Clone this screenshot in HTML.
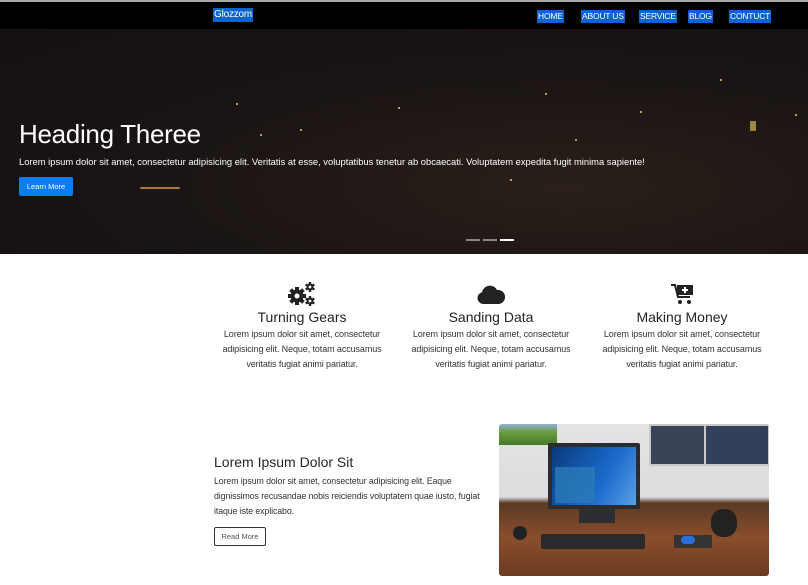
<!DOCTYPE html>
<html><head><style>
*{margin:0;padding:0;box-sizing:border-box}
body{width:808px;height:585px;background:#fff;font-family:"Liberation Sans",sans-serif;position:relative;overflow:hidden;color:#212529}
.nav{position:absolute;top:0;left:0;width:808px;height:29px;background:#000;border-top:2px solid #aaa}
.nav span{position:absolute;background:#0b63ce;color:#fff;font-size:8.5px;line-height:13px;padding:0 1px;letter-spacing:-0.2px}
.hero{position:absolute;top:29px;left:0;width:808px;height:225px;background:radial-gradient(ellipse at 70% 70%,#2a2019 0%,#1a1414 50%,#141011 100%)}
.dot{position:absolute;width:2px;height:2px;background:#f3c46a;border-radius:1px}
h1{position:absolute;left:19px;top:119px;font-weight:300;font-size:26px;color:#fff;letter-spacing:-0.3px}
.sub{position:absolute;left:19px;top:156px;font-size:9.4px;color:#fff}
.btn{position:absolute;left:19px;top:177px;width:54px;height:19px;background:#0a7cf5;color:#fff;font-size:7.5px;text-align:center;line-height:19px;border-radius:2px}
.ind{position:absolute;top:239px;height:2px;width:14px;background:#888}
.col{position:absolute;top:281px;width:172px;text-align:center}
.col h3{font-size:14px;font-weight:500;margin-top:2px}
.col p{font-size:9px;line-height:15px;color:#333;margin-top:2px;letter-spacing:-0.1px}
.ic{height:26px;display:flex;justify-content:center;align-items:center}
</style></head><body>
<div class="nav">
<span style="left:213px;top:6px;font-size:10px;line-height:14px">Glozzom</span>
<span style="left:537px;top:8px">HOME</span>
<span style="left:581px;top:8px">ABOUT US</span>
<span style="left:639px;top:8px">SERVICE</span>
<span style="left:688px;top:8px">BLOG</span>
<span style="left:729px;top:8px">CONTUCT</span>
</div>
<div class="hero">
<div class="dot" style="left:236px;top:74px"></div><div class="dot" style="left:300px;top:100px"></div><div class="dot" style="left:398px;top:78px"></div><div class="dot" style="left:260px;top:105px"></div><div class="dot" style="left:545px;top:64px"></div><div class="dot" style="left:640px;top:82px"></div><div class="dot" style="left:720px;top:50px"></div><div class="dot" style="left:750px;top:92px;width:6px;height:10px;background:#9a8a40"></div><div class="dot" style="left:795px;top:85px"></div><div class="dot" style="left:140px;top:158px;width:40px;background:#a57a3a"></div><div class="dot" style="left:510px;top:150px"></div><div class="dot" style="left:575px;top:110px"></div>
</div>
<h1>Heading Theree</h1>
<div class="sub">Lorem ipsum dolor sit amet, consectetur adipisicing elit. Veritatis at esse, voluptatibus tenetur ab obcaecati. Voluptatem expedita fugit minima sapiente!</div>
<div class="btn">Learn More</div>
<div class="ind" style="left:466px"></div><div class="ind" style="left:483px"></div><div class="ind" style="left:500px;background:#fff"></div>

<div class="col" style="left:216px"><div class="ic"><svg width="28" height="24" viewBox="0 0 28 24">
<g fill="#222"><g transform="translate(9,14)"><rect x="-2" y="-9" width="4" height="18"/><rect x="-2" y="-9" width="4" height="18" transform="rotate(45)"/><rect x="-2" y="-9" width="4" height="18" transform="rotate(90)"/><rect x="-2" y="-9" width="4" height="18" transform="rotate(135)"/><circle r="6.5"/><circle r="2.5" fill="#fff"/></g>
<g transform="translate(22,5)"><rect x="-1.2" y="-5" width="2.4" height="10"/><rect x="-1.2" y="-5" width="2.4" height="10" transform="rotate(60)"/><rect x="-1.2" y="-5" width="2.4" height="10" transform="rotate(120)"/><circle r="3.5"/><circle r="1.4" fill="#fff"/></g>
<g transform="translate(22,19)"><rect x="-1.2" y="-5" width="2.4" height="10"/><rect x="-1.2" y="-5" width="2.4" height="10" transform="rotate(60)"/><rect x="-1.2" y="-5" width="2.4" height="10" transform="rotate(120)"/><circle r="3.5"/><circle r="1.4" fill="#fff"/></g></g></svg></div><h3>Turning Gears</h3><p>Lorem ipsum dolor sit amet, consectetur adipisicing elit. Neque, totam accusamus veritatis fugiat animi pariatur.</p></div>
<div class="col" style="left:405px"><div class="ic"><svg width="28" height="20" viewBox="0 0 28 20"><path d="M6 20a6 6 0 0 1-1-11.8A8 8 0 0 1 20 6a6 6 0 0 1 2 14z" fill="#222"/></svg></div><h3>Sanding Data</h3><p>Lorem ipsum dolor sit amet, consectetur adipisicing elit. Neque, totam accusamus veritatis fugiat animi pariatur.</p></div>
<div class="col" style="left:596px"><div class="ic"><svg width="24" height="22" viewBox="0 0 24 22"><path d="M1 2h4l3 12h12" fill="none" stroke="#222" stroke-width="2"/><rect x="7" y="2" width="16" height="10" fill="#222"/><path d="M15 4v6M12 7h6" stroke="#fff" stroke-width="2"/><circle cx="10" cy="19" r="2" fill="#222"/><circle cx="19" cy="19" r="2" fill="#222"/></svg></div><h3>Making Money</h3><p>Lorem ipsum dolor sit amet, consectetur adipisicing elit. Neque, totam accusamus veritatis fugiat animi pariatur.</p></div>

<div style="position:absolute;left:214px;top:454px;font-size:14px;font-weight:500">Lorem Ipsum Dolor Sit</div>
<div style="position:absolute;left:214px;top:474px;width:270px;font-size:8.8px;line-height:15px;color:#333;letter-spacing:-0.1px">Lorem ipsum dolor sit amet, consectetur adipisicing elit. Eaque dignissimos recusandae nobis reiciendis voluptatem quae iusto, fugiat itaque iste explicabo.</div>
<div style="position:absolute;left:214px;top:527px;width:52px;height:19px;border:1px solid #333;border-radius:2px;font-size:7.5px;line-height:17px;text-align:center;color:#555">Read More</div>

<div style="position:absolute;left:499px;top:424px;width:270px;height:152px;border-radius:3px;overflow:hidden;background:linear-gradient(#e4e4e6 0%,#dcdcde 48%,#5a3a26 52%,#8a4e2c 75%,#6a3a20 100%)">
<div style="position:absolute;left:0;top:0;width:58px;height:21px;background:linear-gradient(#8fb2d4,#6a9a40 40%,#4a7a2a)"></div>
<div style="position:absolute;left:150px;top:0;width:60px;height:42px;background:#3a4458;border:2px solid #c8c8c8"></div>
<div style="position:absolute;left:205px;top:0;width:66px;height:42px;background:#34405a;border:2px solid #c8c8c8"></div>
<div style="position:absolute;left:49px;top:19px;width:92px;height:66px;background:#2a2c30;border-radius:2px"></div>
<div style="position:absolute;left:53px;top:23px;width:84px;height:58px;background:linear-gradient(120deg,#0a3a7a,#1a6acc 60%,#5aa0e8)"></div>
<div style="position:absolute;left:56px;top:43px;width:40px;height:36px;background:#2a7ab8;opacity:.8"></div>
<div style="position:absolute;left:80px;top:85px;width:36px;height:14px;background:#2e2e32"></div>
<div style="position:absolute;left:42px;top:110px;width:104px;height:15px;background:#2a2a2e;border-radius:2px"></div>
<div style="position:absolute;left:175px;top:111px;width:38px;height:13px;background:#333"></div>
<div style="position:absolute;left:182px;top:112px;width:14px;height:8px;background:#2a70d8;border-radius:6px"></div>
<div style="position:absolute;left:212px;top:85px;width:26px;height:28px;background:#222;border-radius:12px"></div>
<div style="position:absolute;left:14px;top:102px;width:14px;height:14px;background:#222;border-radius:7px"></div>
</div>
</body></html>
